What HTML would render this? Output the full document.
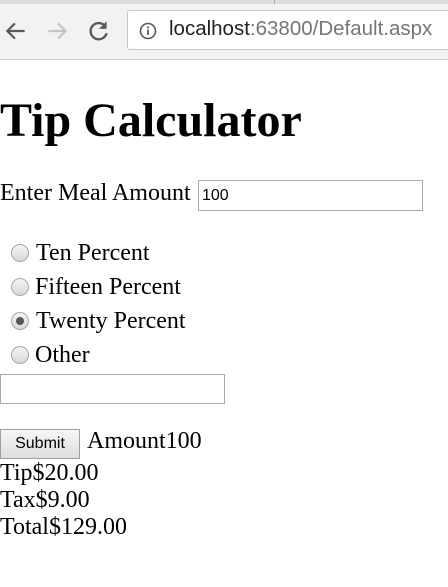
<!DOCTYPE html>
<html><head><style>
body{margin:0;width:448px;height:587px;background:#fff;position:relative;overflow:hidden;font-family:"Liberation Serif",serif;font-size:24px;color:#000}
.a{position:absolute;white-space:nowrap}
.chrome{position:absolute;left:0;top:0;width:448px;height:59px;background:#f2f2f2;border-bottom:1px solid #ccc}
.url{position:absolute;left:127px;top:10px;width:330px;height:40px;background:#fff;border:1px solid #c8c8c8;border-radius:3px;box-sizing:border-box}
.radio{position:absolute;left:11px;width:18px;height:18px;border-radius:50%;border:1px solid #a8a8a8;background:linear-gradient(#f4f4f4,#d8d8d8);box-sizing:border-box}
.inp{position:absolute;border:1px solid #a9a9a9;box-sizing:border-box;background:#fff}
</style></head><body>
<div class="chrome">
<div style="position:absolute;left:0;top:0;width:448px;height:4px;background:#dcdcdc"></div>
<div style="position:absolute;left:274px;top:0;width:1px;height:4px;background:#aaa"></div>
<svg class="a" style="left:3px;top:18px" width="26" height="26" viewBox="0 0 24 24"><path d="M20 12H5M11 5l-7 7 7 7" stroke="#5a5a5a" stroke-width="2" fill="none"/></svg>
<svg class="a" style="left:44px;top:18px" width="26" height="26" viewBox="0 0 24 24"><path d="M4 12h15M13 5l7 7-7 7" stroke="#c4c4c4" stroke-width="2" fill="none"/></svg>
<svg class="a" style="left:86px;top:18px" width="26" height="26" viewBox="0 0 24 24"><path d="M18 8A7.5 7.5 0 1 0 19 14" stroke="#5a5a5a" stroke-width="2.2" fill="none"/><path d="M19 3v7h-7z" fill="#5a5a5a"/></svg>
<div class="url">
<svg class="a" style="left:11px;top:11px" width="18" height="18" viewBox="0 0 18 18"><circle cx="9" cy="9" r="7.5" stroke="#5a5a5a" stroke-width="1.6" fill="none"/><rect x="8.1" y="7.5" width="1.8" height="5.5" fill="#5a5a5a"/><rect x="8.1" y="4.5" width="1.8" height="1.8" fill="#5a5a5a"/></svg>
<div class="a" style="left:41px;top:6px;font-family:'Liberation Sans',sans-serif;font-size:20.5px;color:#222">localhost<span style="color:#757575">:63800/Default.aspx</span></div>
</div>
</div>
<div class="a" style="left:0;top:93px;font-size:48px;font-weight:bold">Tip Calculator</div>
<div class="a" style="left:0;top:180px">Enter Meal Amount</div>
<div class="inp" style="left:198px;top:180px;width:225px;height:31px;font-family:'Liberation Sans',sans-serif;font-size:16px;padding:6px 3px">100</div>
<div class="radio" style="top:244px"></div><div class="a" style="left:36px;top:240px">Ten Percent</div>
<div class="radio" style="top:278px"></div><div class="a" style="left:35px;top:274px">Fifteen Percent</div>
<div class="radio" style="top:312px"><div style="position:absolute;left:4px;top:4px;width:8px;height:8px;border-radius:50%;background:#555"></div></div><div class="a" style="left:36px;top:308px">Twenty Percent</div>
<div class="radio" style="top:346px"></div><div class="a" style="left:35px;top:342px">Other</div>
<div class="inp" style="left:0;top:374px;width:225px;height:30px"></div>
<div class="a" style="left:0;top:429px;width:80px;height:30px;border:1px solid #a0a0a0;box-sizing:border-box;background:linear-gradient(#f6f6f6,#dedede);font-family:'Liberation Sans',sans-serif;font-size:16px;text-align:center;line-height:28px">Submit</div>
<div class="a" style="left:87px;top:428px">Amount100</div>
<div class="a" style="left:0;top:460px">Tip$20.00</div>
<div class="a" style="left:0;top:487px">Tax$9.00</div>
<div class="a" style="left:0;top:514px">Total$129.00</div>
</body></html>
